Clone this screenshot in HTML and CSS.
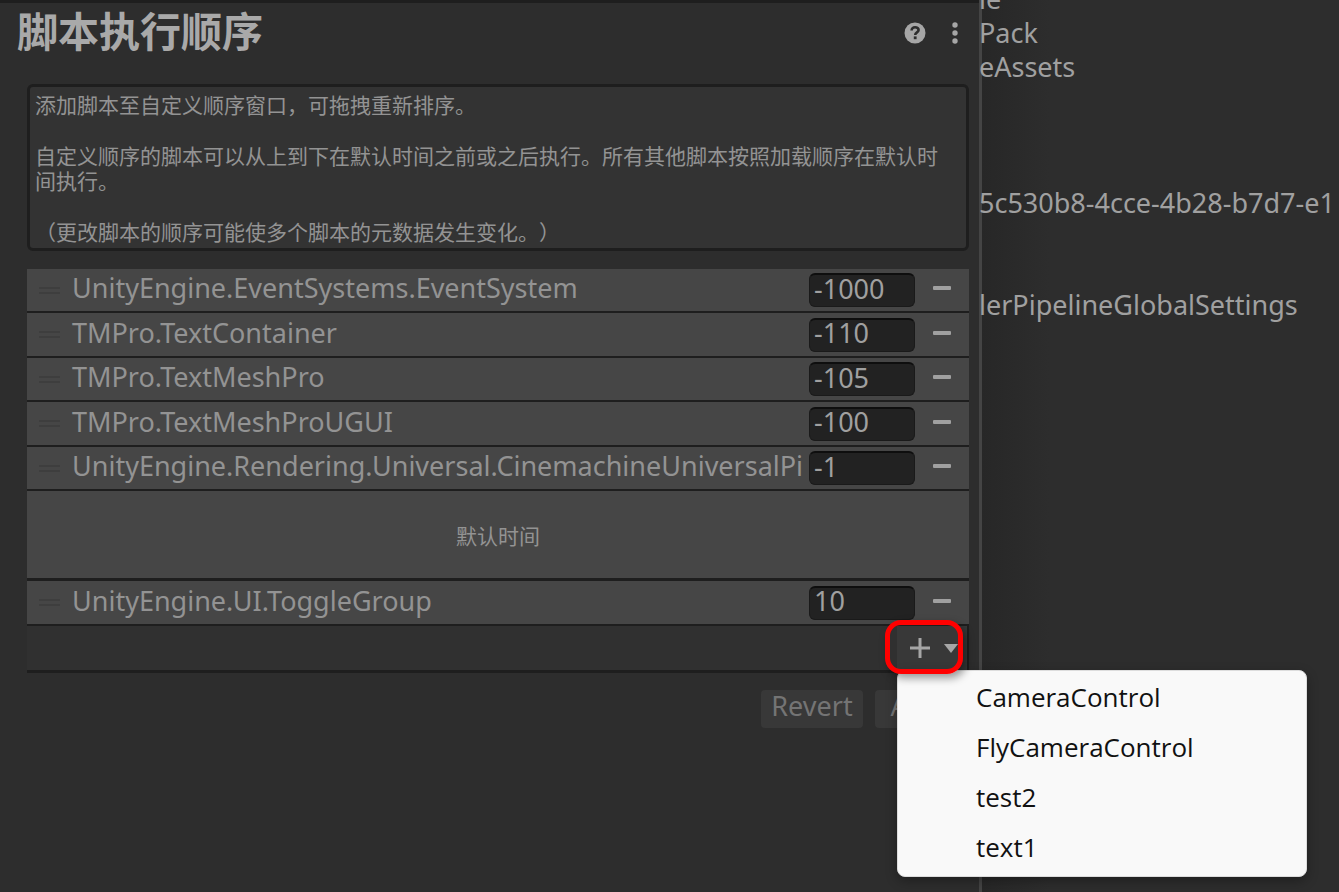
FILE: index.html
```html
<!DOCTYPE html>
<html lang="zh-CN">
<head>
    <meta charset="UTF-8">
    <meta name="viewport" content="width=device-width, initial-scale=1.0">
    <title>脚本执行顺序</title>
    <link rel="stylesheet" href="styles.css">
</head>
<body>

    <!-- Settings panel -->
    <main class="panel">
        <header class="panel-header">
            <h1>脚本执行顺序</h1>
            <div class="header-actions">
                <button type="button" class="icon-button" aria-label="Help">
                    <svg width="22" height="22" viewBox="0 0 22 22">
                        <circle cx="11" cy="11" r="10.5" fill="#a6a6a6"/>
                        <path d="M7.6 8.6C7.6 6.4 9 5.2 11.1 5.2C13.2 5.2 14.6 6.4 14.6 8.1C14.6 10.4 11.2 10.4 11.2 13" fill="none" stroke="#2d2d2d" stroke-width="2.6"/>
                        <rect x="9.8" y="14.4" width="2.8" height="2.8" fill="#2d2d2d"/>
                    </svg>
                </button>
                <button type="button" class="icon-button" aria-label="More">
                    <svg width="6" height="22" viewBox="0 0 6 22" fill="#a6a6a6">
                        <circle cx="3" cy="3" r="2.7"/>
                        <circle cx="3" cy="11" r="2.7"/>
                        <circle cx="3" cy="19" r="2.7"/>
                    </svg>
                </button>
            </div>
        </header>

        <div class="help-box">
            <p>添加脚本至自定义顺序窗口，可拖拽重新排序。</p>
            <p>自定义顺序的脚本可以从上到下在默认时间之前或之后执行。所有其他脚本按照加载顺序在默认时间执行。</p>
            <p>（更改脚本的顺序可能使多个脚本的元数据发生变化。）</p>
        </div>

        <!-- Script order list -->
        <div class="order-list">
            <div class="row">
                <span class="handle"></span>
                <label for="order1">UnityEngine.EventSystems.EventSystem</label>
                <input type="text" id="order1" value="-1000">
                <button type="button" class="remove" aria-label="Remove"></button>
            </div>
            <div class="row">
                <span class="handle"></span>
                <label for="order2">TMPro.TextContainer</label>
                <input type="text" id="order2" value="-110">
                <button type="button" class="remove" aria-label="Remove"></button>
            </div>
            <div class="row">
                <span class="handle"></span>
                <label for="order3">TMPro.TextMeshPro</label>
                <input type="text" id="order3" value="-105">
                <button type="button" class="remove" aria-label="Remove"></button>
            </div>
            <div class="row">
                <span class="handle"></span>
                <label for="order4">TMPro.TextMeshProUGUI</label>
                <input type="text" id="order4" value="-100">
                <button type="button" class="remove" aria-label="Remove"></button>
            </div>
            <div class="row">
                <span class="handle"></span>
                <label for="order5">UnityEngine.Rendering.Universal.CinemachineUniversalPi</label>
                <input type="text" id="order5" value="-1">
                <button type="button" class="remove" aria-label="Remove"></button>
            </div>
            <div class="default-time">默认时间</div>
            <div class="row">
                <span class="handle"></span>
                <label for="order6">UnityEngine.UI.ToggleGroup</label>
                <input type="text" id="order6" value="10">
                <button type="button" class="remove" aria-label="Remove"></button>
            </div>
            <div class="list-footer">
                <div class="add">
                    <button type="button" class="add-button" aria-label="Add script">
                        <svg width="50" height="22" viewBox="0 0 50 22">
                            <path d="M11 1V21M1 11H21" fill="none" stroke="#a6a6a6" stroke-width="3"/>
                            <path d="M35 7H49L42 16Z" fill="#a6a6a6"/>
                        </svg>
                    </button>
                    <ul class="menu">
                        <li><button type="button">CameraControl</button></li>
                        <li><button type="button">FlyCameraControl</button></li>
                        <li><button type="button">test2</button></li>
                        <li><button type="button">text1</button></li>
                    </ul>
                    <span class="marker"></span>
                </div>
            </div>
        </div>

        <div class="actions">
            <button type="button" disabled>Revert</button>
            <button type="button" disabled>Apply</button>
        </div>
    </main>

    <!-- Project files behind the panel -->
    <aside class="project">
        <ul>
            <li>le</li>
            <li>Pack</li>
            <li>eAssets</li>
            <li></li>
            <li></li>
            <li></li>
            <li>5c530b8-4cce-4b28-b7d7-e1</li>
            <li></li>
            <li></li>
            <li>lerPipelineGlobalSettings</li>
        </ul>
    </aside>

</body>
</html>
```
FILE: styles.css
```css
* {
    box-sizing: border-box;
    margin: 0;
    padding: 0;
}

body {
    font-family: "Noto Sans", "Noto Sans CJK SC", sans-serif;
    font-size: 27px;
    background-color: #2d2d2d;
    color: #939393;
    display: grid;
    grid-template-columns: 1fr 360px;
    min-height: 100vh;
    overflow: hidden;
}

button {
    font: inherit;
    color: inherit;
    background: none;
    border: none;
}

ul {
    list-style: none;
}

/* Settings panel */
.panel {
    position: relative;
    z-index: 1;
    min-width: 0;
    border-top: 3px solid #1e1e1e;
    padding: 0 10px 0 27px;
}

.panel-header {
    display: flex;
    justify-content: space-between;
    align-items: center;
    height: 60px;
    margin: 0 11px 21px -10px;
}

h1 {
    font-family: "Noto Sans CJK SC", sans-serif;
    font-size: 41px;
    line-height: 52px;
    padding-bottom: 8px;
    font-weight: bold;
    color: #a9a9a9;
}

.header-actions {
    display: flex;
    gap: 26px;
}

.icon-button svg {
    display: block;
}

.help-box {
    font-family: "Noto Sans CJK SC", sans-serif;
    font-size: 21px;
    line-height: 25px;
    text-spacing-trim: space-all;
    background-color: #333;
    border: 3px solid #1e1e1e;
    border-radius: 6px;
    padding: 5px 12px 4px 5px;
    margin-bottom: 18px;
}

.help-box p + p {
    margin-top: 26px;
}

/* Script order list */
.row {
    display: flex;
    align-items: center;
    height: 45px;
    background-color: #464646;
    border-bottom: 2px solid #1e1e1e;
    padding: 0 18px 0 12px;
}

.row:nth-child(odd) {
    height: 44px;
}

.default-time + .row {
    height: 45px;
}

.handle {
    width: 21px;
    height: 7px;
    border: solid #3e3e3e;
    border-width: 2px 0;
    margin-right: 12px;
}

.row label {
    flex: 1;
    min-width: 0;
    white-space: nowrap;
    line-height: 36px;
    padding-bottom: 4px;
}

.row input {
    font: inherit;
    color: #a0a0a0;
    width: 106px;
    height: 34px;
    background-color: #222;
    border: 1px solid #1a1a1a;
    border-top: 2px solid #0e0e0e;
    border-radius: 6px;
    padding: 0 4px 5px;
    margin: 0 18px 0 4px;
}

.remove {
    width: 18px;
    height: 4px;
    background-color: #a0a0a0;
    border-radius: 1px;
    margin-bottom: 4px;
}

.default-time {
    display: flex;
    justify-content: center;
    align-items: center;
    height: 90px;
    font-size: 21px;
    background-color: #464646;
    border-bottom: 3px solid #1e1e1e;
}

.list-footer {
    display: flex;
    justify-content: flex-end;
    height: 47px;
    background-color: #303030;
    border-bottom: 3px solid #1e1e1e;
    border-right: 2px solid #1e1e1e;
}

.add {
    position: relative;
    width: 70px;
    background-color: #383838;
}

.add-button {
    width: 100%;
    height: 44px;
    padding-left: 12px;
}

.add-button svg {
    display: block;
}

.menu {
    position: absolute;
    top: 100%;
    left: 0;
    width: 410px;
    background-color: #f9f9f9;
    border: 1px solid #ddd;
    border-radius: 8px;
    padding: 3px 0 2px;
    box-shadow: 0 4px 12px rgba(0, 0, 0, 0.3);
}

.menu button {
    font-family: "Open Sans", sans-serif;
    font-size: 26px;
    display: block;
    width: 100%;
    height: 50px;
    color: #111;
    line-height: 46px;
    text-align: left;
    padding: 0 0 4px 78px;
}

.marker {
    position: absolute;
    top: -6px;
    left: -12px;
    width: 78px;
    height: 54px;
    border: 5px solid #f00;
    border-radius: 16px;
    box-shadow: 3px 4px 8px rgba(0, 0, 0, 0.4);
    pointer-events: none;
}

.actions {
    display: flex;
    justify-content: flex-end;
    gap: 12px;
    margin-right: -8px;
    padding-top: 17px;
}

.actions button {
    width: 102px;
    height: 38px;
    line-height: 32px;
    padding-bottom: 6px;
    background-color: #383838;
    border-radius: 4px;
    color: #747474;
}

/* Project files */
.project {
    overflow: hidden;
    background: linear-gradient(to right, #444 3px, #272727 3px, #2d2d2d 70px);
    color: #a0a0a0;
}

.project ul {
    margin-top: -18px;
}

.project li {
    height: 34px;
    line-height: 34px;
    white-space: nowrap;
}
```
